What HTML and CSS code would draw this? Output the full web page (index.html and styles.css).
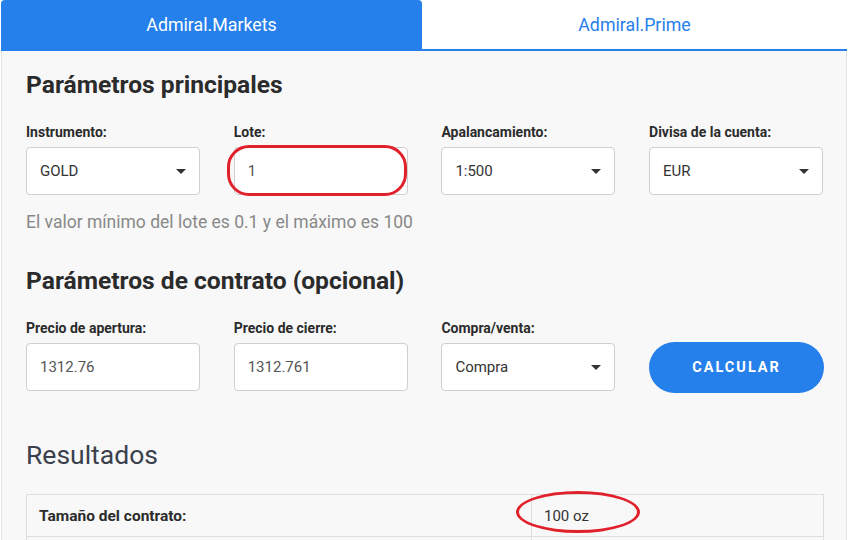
FILE: index.html
```html
<!DOCTYPE html>
<html>
<head>
  <link rel="stylesheet" href="styles.css">
</head>
<body>
  <div class="calc">
    <div class="tabs">
      <div class="tab active">Admiral.Markets</div>
      <div class="tab">Admiral.Prime</div>
    </div>
    <div class="panel">
      <h2 class="section-title">Parámetros principales</h2>
      <div class="fields">
        <div class="field">
          <label>Instrumento:</label>
          <div class="select">GOLD<span class="caret"></span></div>
        </div>
        <div class="field">
          <label>Lote:</label>
          <div class="input">1</div>
          <div class="mark mark-lot"></div>
        </div>
        <div class="field">
          <label>Apalancamiento:</label>
          <div class="select">1:500<span class="caret"></span></div>
        </div>
        <div class="field">
          <label>Divisa de la cuenta:</label>
          <div class="select">EUR<span class="caret"></span></div>
        </div>
      </div>
      <p class="hint">El valor mínimo del lote es 0.1 y el máximo es 100</p>

      <h2 class="section-title second">Parámetros de contrato (opcional)</h2>
      <div class="fields">
        <div class="field">
          <label>Precio de apertura:</label>
          <div class="input">1312.76</div>
        </div>
        <div class="field">
          <label>Precio de cierre:</label>
          <div class="input">1312.761</div>
        </div>
        <div class="field">
          <label>Compra/venta:</label>
          <div class="select">Compra<span class="caret"></span></div>
        </div>
        <div class="field button-field">
          <button class="calc-button">CALCULAR</button>
        </div>
      </div>

      <h3 class="results-title">Resultados</h3>
      <table class="results">
        <tr>
          <td class="result-label">Tamaño del contrato:</td>
          <td class="result-value">100 oz<div class="mark mark-size"></div></td>
        </tr>
        <tr>
          <td class="result-label">&nbsp;</td>
          <td class="result-value">&nbsp;</td>
        </tr>
      </table>
    </div>
  </div>
</body>
</html>
```

FILE: styles.css
```css
body {
  margin: 0;
  background-color: #fff;
  font-family: Roboto, "Liberation Sans", sans-serif;
  color: #333;
}

.calc {
  width: 846px;
  padding-left: 1px;
}

.tabs {
  display: flex;
  height: 49px;
  border-bottom: 2px solid #2680eb;
}

.tab {
  flex: 0 0 421px;
  display: flex;
  align-items: center;
  justify-content: center;
  font-size: 17.8px;
  color: #2680eb;
  background-color: #fff;
}

.tab.active {
  background-color: #2680eb;
  color: #fff;
  border-radius: 4px 4px 0 0;
}

.tab + .tab {
  flex: 1;
}

.panel {
  background-color: #f8f8f8;
  border-left: 1px solid #e2e2e2;
  border-right: 1px solid #e2e2e2;
  padding: 20px 22px 0 24px;
}

.section-title {
  margin: 0;
  font-size: 24.6px;
  line-height: 28px;
  font-weight: 700;
  color: #2b2b2b;
}

.section-title.second {
  margin-top: 35px;
}

.fields {
  display: grid;
  grid-template-columns: repeat(4, 174px);
  column-gap: 33.7px;
  margin-top: 25px;
}

.field {
  position: relative;
  display: flex;
  flex-direction: column;
}

.field label {
  font-size: 14px;
  line-height: 17px;
  font-weight: 700;
  color: #2b2b2b;
  margin-bottom: 6px;
}

.select,
.input {
  position: relative;
  box-sizing: border-box;
  height: 48px;
  padding: 0 13px;
  display: flex;
  align-items: center;
  background-color: #fff;
  border: 1px solid #cfcfcf;
  border-radius: 4px;
  font-size: 15px;
  color: #333;
}

.input {
  color: #555;
}

.caret {
  position: absolute;
  right: 13px;
  top: 21px;
  width: 0;
  height: 0;
  border-left: 5px solid transparent;
  border-right: 5px solid transparent;
  border-top: 5px solid #333;
}

.hint {
  margin: 17px 0 0;
  font-size: 17.5px;
  line-height: 20px;
  color: #888;
}

.button-field {
  padding-top: 22px;
}

.calc-button {
  box-sizing: border-box;
  height: 51px;
  width: 175px;
  border: none;
  border-radius: 26px;
  background-color: #2680eb;
  color: #fff;
  font-family: Roboto, "Liberation Sans", sans-serif;
  font-size: 14.5px;
  font-weight: 700;
  letter-spacing: 2px;
  cursor: pointer;
}

.results-title {
  margin: 46px 0 0;
  font-size: 26.5px;
  line-height: 32px;
  font-weight: 400;
  color: #3a404c;
}

.results {
  width: 100%;
  margin-top: 23px;
  border-collapse: collapse;
  background-color: #f8f8f8;
}

.results td {
  height: 41px;
  border: 1px solid #dedede;
  padding: 0 12px;
}

.result-label {
  width: 480px;
  font-size: 15.5px;
  font-weight: 700;
  color: #2b2b2b;
}

.result-value {
  position: relative;
  font-size: 15px;
  color: #333;
}

/* red annotation ovals drawn over the screenshot */
.mark {
  position: absolute;
  border: 3px solid #e0212b;
  pointer-events: none;
}

.mark-lot {
  left: -7px;
  top: 21px;
  width: 174px;
  height: 45px;
  border-radius: 22px;
}

.mark-size {
  left: -16px;
  top: -4px;
  width: 118px;
  height: 36px;
  border-radius: 50%;
}
```
